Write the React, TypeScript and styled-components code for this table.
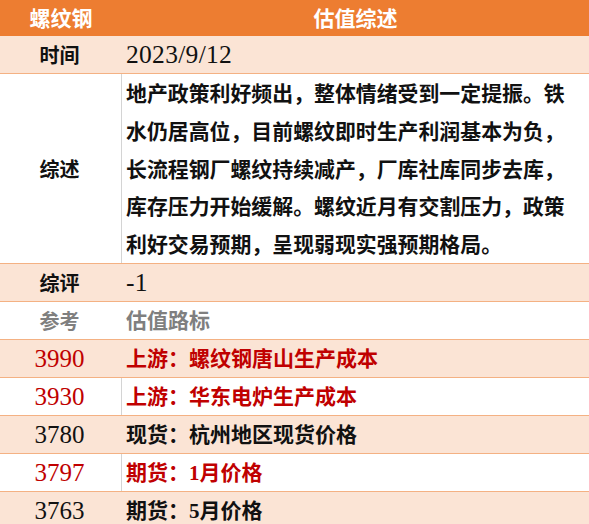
import React from "react";
import styled, { createGlobalStyle } from "styled-components";

const GlobalStyle = createGlobalStyle`
  html, body { margin: 0; padding: 0; background: #ffffff; }
  body { width: 589px; overflow: hidden; }
`;

type Tone = "black" | "red" | "gray";
const toneColor: Record<Tone, string> = {
  black: "#111111",
  red: "#C00000",
  gray: "#7F7F7F",
};

const Table = styled.div`
  width: 589px;
  display: flex;
  flex-direction: column;
  font-family: "Liberation Serif", "Noto Sans CJK SC", serif;
`;

const HeaderRow = styled.div`
  display: grid;
  grid-template-columns: 122px 1fr;
  height: 36px;
  background: #ed7d31;
`;

const HeaderCell = styled.div`
  display: flex;
  align-items: center;
  justify-content: center;
  color: #ffffff;
  font-family: "Noto Sans CJK SC", sans-serif;
  font-weight: 700;
  font-size: 21px;
  padding-bottom: 2px;
`;

const Row = styled.div<{ $shade: boolean; $height?: number }>`
  display: grid;
  grid-template-columns: 122px 1fr;
  box-sizing: border-box;
  height: ${(p) => p.$height ?? 38}px;
  background: ${(p) => (p.$shade ? "#fbe4d5" : "#ffffff")};
  border-bottom: 1px solid #f4b183;
`;

const Label = styled.div<{ $tone: Tone; $num?: boolean; $divider?: boolean }>`
  box-sizing: border-box;
  display: flex;
  align-items: center;
  justify-content: center;
  border-right: 1px solid ${(p) => (p.$divider ? "#d4d4d4" : "transparent")};
  color: ${(p) => toneColor[p.$tone]};
  font-family: ${(p) =>
    p.$num ? `"Liberation Serif", serif` : `"Noto Sans CJK SC", sans-serif`};
  font-weight: ${(p) => (p.$num ? 400 : 700)};
  font-size: ${(p) => (p.$num ? 25 : 20)}px;
  padding-right: 2px;
`;

const Value = styled.div<{ $tone: Tone; $num?: boolean }>`
  display: flex;
  align-items: center;
  padding-left: 4px;
  padding-bottom: ${(p) => (p.$num ? 0 : 3)}px;
  color: ${(p) => toneColor[p.$tone]};
  font-family: ${(p) =>
    p.$num
      ? `"Liberation Serif", serif`
      : `"Liberation Serif", "Noto Sans CJK SC", serif`};
  font-weight: ${(p) => (p.$num ? 400 : 700)};
  font-size: ${(p) => (p.$num ? 25.5 : 21)}px;
  letter-spacing: ${(p) => (p.$num ? "0.3px" : "0")};
  white-space: nowrap;
`;

const Paragraph = styled.div`
  padding-left: 4px;
  color: #111111;
  font-family: "Noto Sans CJK SC", sans-serif;
  font-weight: 700;
  font-size: 20.9px;
  line-height: 37.8px;
  white-space: pre-line;
  letter-spacing: 0;
`;

const summary = [
  "地产政策利好频出，整体情绪受到一定提振。铁",
  "水仍居高位，目前螺纹即时生产利润基本为负，",
  "长流程钢厂螺纹持续减产，厂库社库同步去库，",
  "库存压力开始缓解。螺纹近月有交割压力，政策",
  "利好交易预期，呈现弱现实强预期格局。",
].join("\n");

type Ref = { price: string; text: string; tone: Tone; shade: boolean };

const refs: Ref[] = [
  { price: "3990", text: "上游：螺纹钢唐山生产成本", tone: "red", shade: true },
  { price: "3930", text: "上游：华东电炉生产成本", tone: "red", shade: false },
  { price: "3780", text: "现货：杭州地区现货价格", tone: "black", shade: true },
  { price: "3797", text: "期货：1月价格", tone: "red", shade: false },
  { price: "3763", text: "期货：5月价格", tone: "black", shade: true },
];

export default function App() {
  return (
    <>
      <GlobalStyle />
      <Table>
        <HeaderRow>
          <HeaderCell>螺纹钢</HeaderCell>
          <HeaderCell>估值综述</HeaderCell>
        </HeaderRow>
        <Row $shade $height={38}>
          <Label $tone="black">时间</Label>
          <Value $tone="black" $num>
            2023/9/12
          </Value>
        </Row>
        <Row $shade={false} $height={190}>
          <Label $tone="black" $divider>
            综述
          </Label>
          <Paragraph>{summary}</Paragraph>
        </Row>
        <Row $shade>
          <Label $tone="black">综评</Label>
          <Value $tone="black" $num>
            -1
          </Value>
        </Row>
        <Row $shade={false}>
          <Label $tone="gray">参考</Label>
          <Value $tone="gray">估值路标</Value>
        </Row>
        {refs.map((r) => (
          <Row key={r.price} $shade={r.shade}>
            <Label $tone={r.tone} $num $divider={!r.shade}>
              {r.price}
            </Label>
            <Value $tone={r.tone}>{r.text}</Value>
          </Row>
        ))}
      </Table>
    </>
  );
}
